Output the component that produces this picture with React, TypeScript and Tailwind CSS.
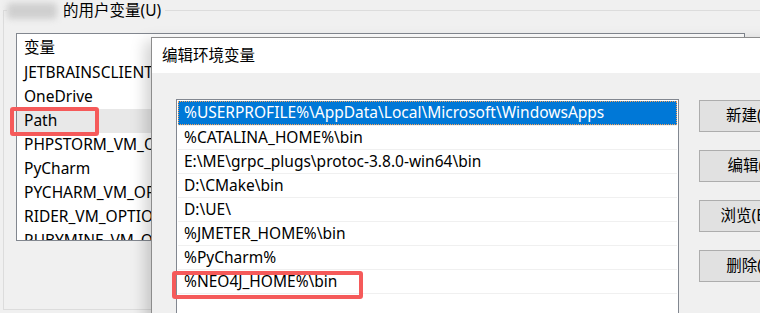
const font = { fontFamily: '"Noto Sans", "Noto Sans CJK SC", sans-serif' };

const userVars = [
  'JETBRAINSCLIENT_VM_OPTIONS',
  'OneDrive',
  'Path',
  'PHPSTORM_VM_OPTIONS',
  'PyCharm',
  'PYCHARM_VM_OPTIONS',
  'RIDER_VM_OPTIONS',
  'RUBYMINE_VM_OPTIONS',
];

const paths = [
  '%USERPROFILE%\\AppData\\Local\\Microsoft\\WindowsApps',
  '%CATALINA_HOME%\\bin',
  'E:\\ME\\grpc_plugs\\protoc-3.8.0-win64\\bin',
  'D:\\CMake\\bin',
  'D:\\UE\\',
  '%JMETER_HOME%\\bin',
  '%PyCharm%',
  '%NEO4J_HOME%\\bin',
  '',
];

const buttons = ['新建(N)', '编辑(E)', '浏览(B)...', '删除(D)'];

const App = () => {
  return (
    <div
      className="relative w-[760px] h-[313px] overflow-hidden bg-[#f0f0f0] text-[15.5px] text-black pl-[3px] pt-[10px]"
      style={font}
    >
      {/* user variables group */}
      <div className="relative border border-[#dcdcdc] w-[800px] h-[300px] pl-[12px] pt-[22px]">
        <div className="absolute left-[3px] -top-[10px] h-[20px] flex items-center bg-[#f0f0f0] pr-[4px]">
          <span className="inline-block w-[50px] h-[16px] mr-[6px] rounded bg-[#cfcfcf] blur-[3px]" />
          <span>的用户变量(U)</span>
        </div>
        <div className="w-[729px] h-[208px] border border-[#82878f] bg-white overflow-hidden">
          <div className="h-[27px] pl-[7px] flex items-center">变量</div>
          {userVars.map((v) => (
            <div
              key={v}
              className={
                v === 'Path'
                  ? 'h-[24px] pl-[7px] flex items-center bg-[#e8e8e8] whitespace-nowrap'
                  : 'h-[24px] pl-[7px] flex items-center whitespace-nowrap'
              }
            >
              {v}
            </div>
          ))}
        </div>
      </div>

      {/* red mark around Path */}
      <div className="absolute left-[10px] top-[107px] w-[89px] h-[29px] border-[4px] border-[#f55a5a] rounded-[3px]" />

      {/* edit dialog */}
      <div className="absolute left-[151px] top-[37px] w-[720px] h-[300px] border border-[#8c8c8c] bg-[#f0f0f0] shadow-[-6px_4px_14px_rgba(0,0,0,0.18)]">
        <div className="h-[35px] bg-white pl-[10px] flex items-center">编辑环境变量</div>
        <div className="flex items-start pl-[24px] pt-[26px] gap-[20px]">
          <div className="w-[503px] h-[240px] shrink-0 border border-[#828790] bg-white p-[1px]">
            {paths.map((p, i) => (
              <div
                key={i}
                className={
                  i === 0
                    ? 'h-[24px] pl-[5px] flex items-center bg-[#0078d7] text-white border border-dotted border-[#f5a25a] whitespace-nowrap'
                    : 'h-[24px] pl-[6px] flex items-center border-t border-[#f0f0f0] whitespace-nowrap'
                }
              >
                {p}
              </div>
            ))}
          </div>
          <div className="flex flex-col gap-[18px] mt-[1px] shrink-0">
            {buttons.map((b) => (
              <div
                key={b}
                className="w-[106px] h-[32px] border border-[#adadad] bg-[#e1e1e1] flex items-center justify-center whitespace-nowrap"
              >
                {b}
              </div>
            ))}
          </div>
        </div>
      </div>

      {/* red mark around NEO4J */}
      <div className="absolute left-[172px] top-[271px] w-[191px] h-[28px] border-[4px] border-[#f55a5a] rounded-[3px]" />
    </div>
  );
};

export default App;
